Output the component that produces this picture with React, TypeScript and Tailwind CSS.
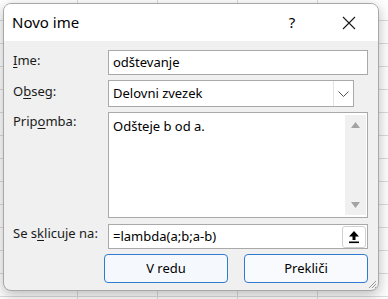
import React from "react";

const font = { fontFamily: '"Segoe UI", "Noto Sans", sans-serif' };

function Label({ children }: { children: React.ReactNode }) {
  return <div className="w-[95px] shrink-0 text-[13px] text-[#1a1a1a]">{children}</div>;
}

function UploadIcon() {
  return (
    <svg width="12" height="14" viewBox="0 0 12 14">
      <path d="M6 1 L11 6.5 H7.5 V10 H4.5 V6.5 H1 Z" fill="#000" />
      <rect x="1" y="11.5" width="10" height="1.6" fill="#000" />
    </svg>
  );
}

export default function App() {
  return (
    <div
      className="w-[388px] h-[299px] overflow-hidden bg-white bg-[linear-gradient(to_right,#dcdcdc_1px,transparent_1px),linear-gradient(to_bottom,#dcdcdc_1px,transparent_1px)] bg-[size:80px_23px] bg-[position:77px_20px] pt-[3px] pl-[3px]"
      style={font}
    >
      <div className="relative w-[376px] h-[288px] rounded-lg border border-[#a8a8a8] bg-[#f0f0f0] overflow-hidden shadow-[0_4px_14px_rgba(0,0,0,0.28)] flex flex-col">
        {/* title bar */}
        <div className="h-[37px] bg-white flex items-center pl-[8px] shrink-0">
          <span className="text-[15px] text-black flex-1">Novo ime</span>
          <span className="w-[20px] text-center text-[15px] text-black mr-[40px]">?</span>
          <div className="w-[14px] mr-[22px] flex items-center justify-center">
            <svg width="14" height="14" viewBox="0 0 14 14">
              <path d="M1 1 L13 13 M13 1 L1 13" stroke="#1a1a1a" strokeWidth="1.1" />
            </svg>
          </div>
        </div>

        {/* body */}
        <div className="flex flex-col pt-[9px] pl-[9px] pr-[10px] gap-[5px]">
          <div className="flex items-center">
            <Label>
              <div className="-mt-[3px]">
                <span className="underline underline-offset-2">I</span>me:
              </div>
            </Label>
            <div className="flex-1 h-[25px] bg-white border border-[#a9a9a9] flex items-center px-[4px] text-[13px] text-black">
              odštevanje
            </div>
          </div>

          <div className="flex items-center">
            <Label>
              <div className="-mt-[4px]">
                O<span className="underline underline-offset-2">b</span>seg:
              </div>
            </Label>
            <div className="w-[246px] h-[27px] bg-white border border-[#a9a9a9] flex items-center text-[13px] text-black">
              <span className="flex-1 px-[4px]">Delovni zvezek</span>
              <div className="w-[20px] h-full border-l border-[#e3e3e3] flex items-center justify-center">
                <svg width="11" height="6" viewBox="0 0 11 6">
                  <path d="M0.5 0.5 L5.5 5.5 L10.5 0.5" fill="none" stroke="#555" strokeWidth="1" />
                </svg>
              </div>
            </div>
          </div>

          <div className="flex items-start">
            <Label>
              <div>
                Prip<span className="underline underline-offset-2">o</span>mba:
              </div>
            </Label>
            <div className="flex-1 h-[106px] bg-white border border-[#a9a9a9] flex text-[13px] text-black">
              <div className="flex-1 px-[4px] pt-[4px]">Odšteje b od a.</div>
              <div className="w-[21px] my-[2px] mr-[1px] bg-[#f0f0f0] flex flex-col items-center justify-between py-[7px]">
                <svg width="9" height="6" viewBox="0 0 9 6">
                  <path d="M4.5 0 L9 6 H0 Z" fill="#a3a3a3" />
                </svg>
                <svg width="9" height="6" viewBox="0 0 9 6">
                  <path d="M0 0 H9 L4.5 6 Z" fill="#a3a3a3" />
                </svg>
              </div>
            </div>
          </div>

          <div className="flex items-center mt-[1px]">
            <Label>
              <div className="-mt-[5px]">
                Se s<span className="underline underline-offset-2">k</span>licuje na:
              </div>
            </Label>
            <div className="flex-1 h-[25px] bg-white border border-[#a9a9a9] flex items-center text-[13px] text-black">
              <span className="flex-1 px-[4px]">=lambda(a;b;a-b)</span>
              <div className="w-[24px] h-[22px] mr-[1px] rounded-[3px] border border-[#d0d0d0] bg-white flex items-center justify-center">
                <UploadIcon />
              </div>
            </div>
          </div>

          <div className="flex justify-end gap-[16px]">
            <button className="w-[124px] h-[29px] rounded-[4px] border border-[#2f7bd0] bg-[#f5f9fe] text-[13px] text-black">
              V redu
            </button>
            <button className="w-[124px] h-[29px] rounded-[4px] border border-[#2f7bd0] bg-[#f8fafd] text-[13px] text-black">
              Prekliči
            </button>
          </div>
        </div>

        <svg className="absolute right-[1px] bottom-[1px]" width="10" height="10" viewBox="0 0 10 10">
          <path d="M9 2 L2 9 M9 5 L5 9 M9 8 L8 9" stroke="#9a9a9a" strokeWidth="1" />
        </svg>
      </div>
    </div>
  );
}
